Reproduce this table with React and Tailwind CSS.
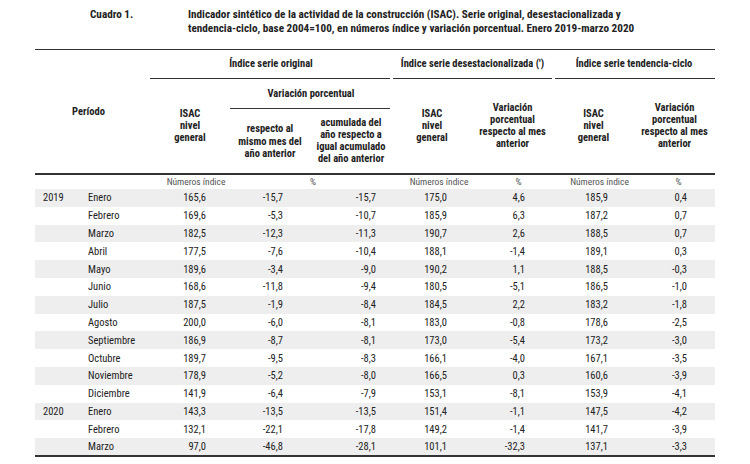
import React from "react";

const rows = [
  ["2019", "Enero", "165,6", "-15,7", "-15,7", "175,0", "4,6", "185,9", "0,4"],
  ["", "Febrero", "169,6", "-5,3", "-10,7", "185,9", "6,3", "187,2", "0,7"],
  ["", "Marzo", "182,5", "-12,3", "-11,3", "190,7", "2,6", "188,5", "0,7"],
  ["", "Abril", "177,5", "-7,6", "-10,4", "188,1", "-1,4", "189,1", "0,3"],
  ["", "Mayo", "189,6", "-3,4", "-9,0", "190,2", "1,1", "188,5", "-0,3"],
  ["", "Junio", "168,6", "-11,8", "-9,4", "180,5", "-5,1", "186,5", "-1,0"],
  ["", "Julio", "187,5", "-1,9", "-8,4", "184,5", "2,2", "183,2", "-1,8"],
  ["", "Agosto", "200,0", "-6,0", "-8,1", "183,0", "-0,8", "178,6", "-2,5"],
  ["", "Septiembre", "186,9", "-8,7", "-8,1", "173,0", "-5,4", "173,2", "-3,0"],
  ["", "Octubre", "189,7", "-9,5", "-8,3", "166,1", "-4,0", "167,1", "-3,5"],
  ["", "Noviembre", "178,9", "-5,2", "-8,0", "166,5", "0,3", "160,6", "-3,9"],
  ["", "Diciembre", "141,9", "-6,4", "-7,9", "153,1", "-8,1", "153,9", "-4,1"],
  ["2020", "Enero", "143,3", "-13,5", "-13,5", "151,4", "-1,1", "147,5", "-4,2"],
  ["", "Febrero", "132,1", "-22,1", "-17,8", "149,2", "-1,4", "141,7", "-3,9"],
  ["", "Marzo", "97,0", "-46,8", "-28,1", "101,1", "-32,3", "137,1", "-3,3"],
];

const pads = ["pr-[24px]", "pr-[27px]", "pr-[16px]", "pr-[25px]", "pr-[28px]", "pr-[26px]", "pr-[28px]"];

function Stack({ lines }) {
  return (
    <>
      {lines.map((l, i) => (
        <div key={i}>{l}</div>
      ))}
    </>
  );
}

export default function App() {
  return (
    <div className="w-[750px] h-[464px] bg-white text-[#222] overflow-hidden font-['Roboto_Condensed','Open_Sans',sans-serif]">
      <div className="flex pt-[8px] h-[49px] font-bold text-[11.2px] leading-[14px]">
        <div className="pl-[90px] w-[188px]">Cuadro 1.</div>
        <div>
          <div>Indicador sintético de la actividad de la construcción (ISAC). Serie original, desestacionalizada y</div>
          <div>tendencia-ciclo, base 2004=100, en números índice y variación porcentual. Enero 2019-marzo 2020</div>
        </div>
      </div>
      <table className="ml-[35px] w-[680px] table-fixed border-collapse border-t border-[#333]">
        <colgroup>
          <col className="w-[45px]" />
          <col className="w-[70px]" />
          <col className="w-[80px]" />
          <col className="w-[80px]" />
          <col className="w-[82px]" />
          <col className="w-[80px]" />
          <col className="w-[81px]" />
          <col className="w-[81px]" />
          <col className="w-[81px]" />
        </colgroup>
        <thead className="font-bold text-[10.5px] leading-[12px] text-center">
          <tr className="h-[29px]">
            <th rowSpan={3} colSpan={2} className="p-0 text-center align-middle font-bold">
              <div className="pr-[8px]">Período</div>
            </th>
            <th colSpan={3} className="p-0 align-bottom font-bold">
              <div className="h-[28px] flex items-center justify-center">Índice serie original</div>
              <div className="h-px bg-[#333] mr-[2px]" />
            </th>
            <th colSpan={2} className="p-0 align-bottom font-bold">
              <div className="h-[28px] flex items-center justify-center">Índice serie desestacionalizada (')</div>
              <div className="h-px bg-[#333] mx-[1px]" />
            </th>
            <th colSpan={2} className="p-0 align-bottom font-bold">
              <div className="h-[28px] flex items-center justify-center">Índice serie tendencia-ciclo</div>
              <div className="h-px bg-[#333] ml-[2px]" />
            </th>
          </tr>
          <tr className="h-[30px]">
            <th rowSpan={2} className="p-0 align-middle font-bold">
              <Stack lines={["ISAC", "nivel", "general"]} />
            </th>
            <th colSpan={2} className="p-0 align-bottom font-bold">
              <div className="h-[29px] flex items-center justify-center">Variación porcentual</div>
              <div className="h-px bg-[#333] mr-[2px]" />
            </th>
            <th rowSpan={2} className="p-0 align-middle font-bold">
              <Stack lines={["ISAC", "nivel", "general"]} />
            </th>
            <th rowSpan={2} className="p-0 align-middle font-bold">
              <Stack lines={["Variación", "porcentual", "respecto al mes", "anterior"]} />
            </th>
            <th rowSpan={2} className="p-0 align-middle font-bold">
              <Stack lines={["ISAC", "nivel", "general"]} />
            </th>
            <th rowSpan={2} className="p-0 align-middle font-bold">
              <Stack lines={["Variación", "porcentual", "respecto al mes", "anterior"]} />
            </th>
          </tr>
          <tr className="h-[65px] border-b-2 border-[#333]">
            <th className="p-0 align-middle font-bold leading-[12.5px]">
              <div className="pt-[2px]">
                <Stack lines={["respecto al", "mismo mes del", "año anterior"]} />
              </div>
            </th>
            <th className="p-0 align-middle font-bold">
              <Stack lines={["acumulada del", "año respecto a", "igual acumulado", "del año anterior"]} />
            </th>
          </tr>
        </thead>
        <tbody className="text-[10.5px]">
          <tr className="h-[14px] text-[9.5px] text-[#555] leading-[14px]">
            <td className="p-0" />
            <td className="p-0" />
            <td className="p-0 text-center pl-[12px]">Números índice</td>
            <td colSpan={2} className="p-0 text-center pl-[4px]">%</td>
            <td className="p-0 text-center pl-[14px]">Números índice</td>
            <td className="p-0 text-center pl-[12px]">%</td>
            <td className="p-0 text-center pl-[12px]">Números índice</td>
            <td className="p-0 text-center pl-[8px]">%</td>
          </tr>
          {rows.map((r, i) => (
            <tr
              key={i}
              className={
                "h-[17.8px] leading-[17px] " +
                (i % 2 === 0 ? "bg-[#eeeeee] " : "") +
                (i === rows.length - 1 ? "border-b-2 border-[#333]" : "")
              }
            >
              <td className="p-0 pl-[8px]">{r[0]}</td>
              <td className="p-0 pl-[8px]">{r[1]}</td>
              {r.slice(2).map((v, j) => (
                <td key={j} className={"p-0 text-right " + pads[j]}>
                  {v}
                </td>
              ))}
            </tr>
          ))}
        </tbody>
      </table>
    </div>
  );
}
